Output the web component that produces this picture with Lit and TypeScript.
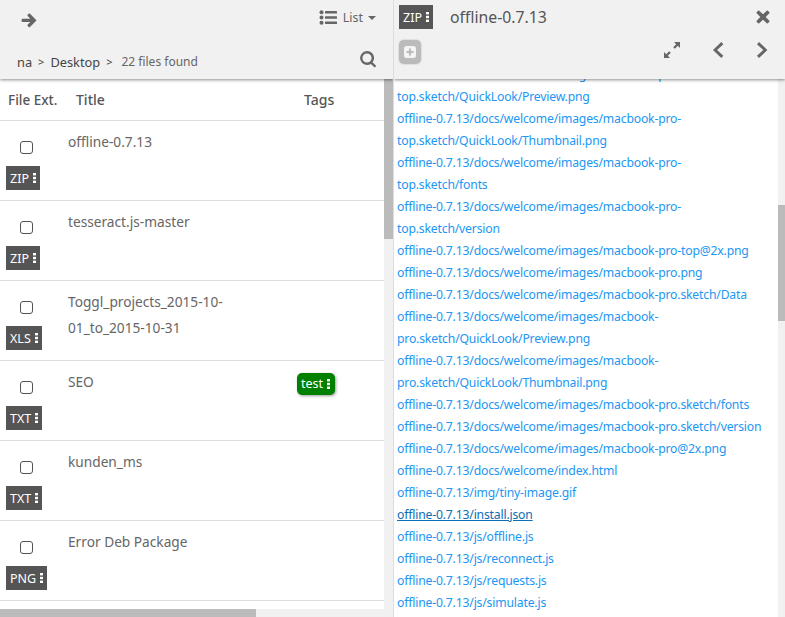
import { LitElement, html, css, svg } from "lit";
import { customElement } from "lit/decorators.js";

const dots = html`<svg class="dots" viewBox="0 0 3 10" width="3" height="10"><rect width="3" height="2.4" y="0" /><rect width="3" height="2.4" y="3.8" /><rect width="3" height="2.4" y="7.6" /></svg>`;
const chip = (t: string) => html`<span class="chip">${t}${dots}</span>`;

const rows = [
  { t: ["offline-0.7.13"], e: "ZIP" },
  { t: ["tesseract.js-master"], e: "ZIP" },
  { t: ["Toggl_projects_2015-10-", "01_to_2015-10-31"], e: "XLS" },
  { t: ["SEO"], e: "TXT", tag: "test" },
  { t: ["kunden_ms"], e: "TXT" },
  { t: ["Error Deb Package"], e: "PNG" },
];

const P = "offline-0.7.13/docs/welcome/images/";
const links = [
  P + "macbook-pro-",
  "top.sketch/QuickLook/Preview.png",
  P + "macbook-pro-",
  "top.sketch/QuickLook/Thumbnail.png",
  P + "macbook-pro-",
  "top.sketch/fonts",
  P + "macbook-pro-",
  "top.sketch/version",
  P + "macbook-pro-top@2x.png",
  P + "macbook-pro.png",
  P + "macbook-pro.sketch/Data",
  P + "macbook-",
  "pro.sketch/QuickLook/Preview.png",
  P + "macbook-",
  "pro.sketch/QuickLook/Thumbnail.png",
  P + "macbook-pro.sketch/fonts",
  P + "macbook-pro.sketch/version",
  P + "macbook-pro@2x.png",
  "offline-0.7.13/docs/welcome/index.html",
  "offline-0.7.13/img/tiny-image.gif",
  "offline-0.7.13/install.json",
  "offline-0.7.13/js/offline.js",
  "offline-0.7.13/js/reconnect.js",
  "offline-0.7.13/js/requests.js",
  "offline-0.7.13/js/simulate.js",
];

const icon = (w: number, h: number, vb: string, body: unknown, cls = "ic") =>
  html`<svg class=${cls} width=${w} height=${h} viewBox=${vb}>${body}</svg>`;

@customElement("app-root")
export class AppRoot extends LitElement {
  static styles = css`
    :host { display: block; width: 785px; height: 617px; overflow: hidden; font-family: "Noto Sans", sans-serif; color: #555; background: #fff; }
    .app { display: grid; grid-template-columns: 393px 392px; height: 617px; }
    .left, .right { display: flex; flex-direction: column; height: 617px; min-width: 0; overflow: hidden; position: relative; }
    .right { border-left: 1px solid #ddd; box-sizing: border-box; }
    .hdr { height: 79px; flex: none; background: #f1f1f1; box-shadow: 0 1px 3px rgba(0,0,0,.45); position: relative; z-index: 2; box-sizing: border-box; }
    .ic { fill: #666; display: block; flex: none; }
    .l1 { display: flex; align-items: center; justify-content: space-between; height: 40px; padding: 0 17px 0 21px; }
    .viewbtn { display: flex; align-items: center; gap: 5px; font-size: 12.5px; color: #666; margin-top: -6px; }
    .caret { width: 0; height: 0; border: 4px solid transparent; border-top-color: #666; border-bottom: 0; margin-top: 2px; }
    .l2 { display: flex; align-items: center; justify-content: space-between; height: 39px; padding: 0 16px 0 17px; }
    .crumbs { display: flex; align-items: center; font-size: 12.8px; color: #444; margin-top: 4px; }
    .sep { margin: 0 6px; font-size: 11px; }
    .found { font-size: 12px; color: #666; margin-left: 3px; }
    .lbody { flex: 1; display: grid; grid-template-columns: 384px 9px; grid-template-rows: 1fr 8px; min-height: 0; }
    .tbl { overflow: hidden; min-height: 0; }
    .thead { display: grid; grid-template-columns: 76px 228px 1fr; height: 42px; box-sizing: border-box; align-items: center; border-bottom: 1px solid #ddd; font-size: 14px; font-weight: 500; color: #555; }
    .thead span:first-child { padding-left: 8px; font-size: 13.5px; }
    .row { display: grid; grid-template-columns: 68px 229px 1fr; height: 80px; box-sizing: border-box; border-bottom: 1px solid #ddd; }
    .sel { display: flex; flex-direction: column; align-items: flex-start; padding: 20px 0 0 6px; }
    .cb { width: 11px; height: 11px; border: 1.5px solid #555; border-radius: 3px; margin: 0 0 0 14px; }
    .chip { display: inline-flex; align-items: center; gap: 4px; height: 24px; box-sizing: border-box; padding: 0 4px; background: #555; color: #fff; font-size: 12.5px; }
    .dots { fill: currentColor; flex: none; }
    .sel .chip { margin-top: 12px; }
    .title { font-size: 13.7px; line-height: 26px; padding-top: 8px; color: #666; }
    .tagcell { padding-top: 10px; }
    .tag { display: inline-flex; align-items: center; gap: 4px; height: 22px; box-sizing: border-box; padding: 0 5px 0 4px; background: #008000; color: #fff; font-size: 12.5px; border-radius: 5px; box-shadow: 1px 1px 3px rgba(0,0,0,.4); }
    .vtrack { background: #f1f1f1; grid-row: 1 / 3; grid-column: 2; }
    .vthumb { background: #bbb; height: 160px; }
    .htrack { background: #f1f1f1; }
    .hthumb { background: #bbb; width: 256px; height: 8px; }
    .r1 { display: flex; align-items: center; height: 34px; padding: 0 15px 0 5px; box-sizing: border-box; }
    .name { font-size: 15.8px; color: #555; margin-left: 17px; flex: 1; margin-top: -1px; }
    .r2 { display: flex; align-items: center; height: 36px; padding: 0 17px 0 5px; }
    .add { width: 22px; height: 24px; background: #bbb; border-radius: 5px; display: flex; align-items: center; justify-content: center; box-shadow: 0 0 2px rgba(0,0,0,.25); }
    .nav { margin-left: auto; display: flex; align-items: center; gap: 32px; margin-top: -4px; }
    .rbody { flex: 1; display: grid; grid-template-columns: 1fr 7px; min-height: 0; }
    .list { overflow: hidden; padding-left: 3px; min-height: 0; }
    .inner { margin-top: -15px; }
    .list a { display: block; font-size: 12.2px; letter-spacing: -.18px; line-height: 22px; color: #2196f3; white-space: nowrap; }
    .list a.hot { color: #0b6eb8; text-decoration: underline; }
    .rtrack { background: #f1f1f1; padding-top: 126px; }
    .rthumb { background: #bbb; height: 116px; }
  `;

  render() {
    const arrow = svg`<path d="M15.2 8.7 9 14.9c-.4.4-1 .4-1.4 0l-.9-.9c-.4-.4-.4-1 0-1.4l2.6-2.6H1.6c-.6 0-1-.4-1-1V7.7c0-.6.4-1 1-1h7.7L6.7 4.1c-.4-.4-.4-1 0-1.4l.9-.9c.4-.4 1-.4 1.4 0l6.2 6.2c.4.3.4.3 0 .7z"/>`;
    const list = svg`<circle cx="2" cy="2.2" r="2"/><circle cx="2" cy="7.5" r="2"/><circle cx="2" cy="12.8" r="2"/><rect x="5.5" y="1" width="12" height="2.4" rx=".5"/><rect x="5.5" y="6.3" width="12" height="2.4" rx=".5"/><rect x="5.5" y="11.6" width="12" height="2.4" rx=".5"/>`;
    const search = svg`<path fill-rule="evenodd" d="M7 0a7 7 0 0 1 5.6 11.2l3.7 3.7-1.7 1.7-3.7-3.7A7 7 0 1 1 7 0zm0 2.4a4.6 4.6 0 1 0 0 9.2 4.6 4.6 0 0 0 0-9.2z"/>`;
    const close = svg`<path d="M3 .6 6.5 4 10 .6c.3-.3.7-.3 1 0l1.4 1.4c.3.3.3.7 0 1L9 6.5l3.4 3.5c.3.3.3.7 0 1L11 12.4c-.3.3-.7.3-1 0L6.5 9 3 12.4c-.3.3-.7.3-1 0L.6 11c-.3-.3-.3-.7 0-1L4 6.5.6 3c-.3-.3-.3-.7 0-1L2 .6c.3-.3.7-.3 1 0z"/>`;
    const expand = svg`<path d="M10 0h6v6l-2.2-2.2-3 3-1.6-1.6 3-3zM6 16H0v-6l2.2 2.2 3-3 1.6 1.6-3 3z"/>`;
    const left = svg`<path d="M8.6 0 10.5 2 4.6 7.5l5.9 5.5-1.9 2L.8 7.5z"/>`;
    const right = svg`<path d="M2.7 0 .8 2l5.9 5.5L.8 13l1.9 2 7.8-7.5z"/>`;
    const plus = svg`<rect width="12" height="12" rx="2.5" fill="#f4f4f4"/><path d="M5 2.5h2V5h2.5v2H7v2.5H5V7H2.5V5H5z" fill="#bbb"/>`;
    return html`<div class="app">
      <section class="left">
        <header class="hdr">
          <div class="l1">
            ${icon(16, 17, "0 0 16 17", arrow)}
            <div class="viewbtn">${icon(19, 15, "0 0 18 15", list)}<span>List</span><span class="caret"></span></div>
          </div>
          <div class="l2">
            <div class="crumbs"><span>na</span><span class="sep">&gt;</span><span>Desktop</span><span class="sep">&gt;</span><span class="found">22 files found</span></div>
            ${icon(17, 17, "0 0 17 17", search)}
          </div>
        </header>
        <div class="lbody">
          <div class="tbl">
            <div class="thead"><span>File Ext.</span><span>Title</span><span>Tags</span></div>
            ${rows.map(r => html`<div class="row">
              <div class="sel"><span class="cb"></span>${chip(r.e)}</div>
              <div class="title">${r.t.map(l => html`<div>${l}</div>`)}</div>
              <div class="tagcell">${r.tag ? html`<span class="tag">${r.tag}${dots}</span>` : ""}</div>
            </div>`)}
          </div>
          <div class="vtrack"><div class="vthumb"></div></div>
          <div class="htrack"><div class="hthumb"></div></div>
        </div>
      </section>
      <section class="right">
        <header class="hdr">
          <div class="r1">${chip("ZIP")}<span class="name">offline-0.7.13</span>${icon(14, 14, "0 0 13 13", close)}</div>
          <div class="r2">
            <div class="add">${icon(12, 12, "0 0 12 12", plus)}</div>
            <div class="nav">${icon(16, 16, "0 0 16 16", expand)}${icon(12, 16, "0 0 11 15", left)}${icon(12, 16, "0 0 11 15", right)}</div>
          </div>
        </header>
        <div class="rbody">
          <div class="list"><div class="inner">
            ${links.map(l => html`<a class=${l.endsWith("install.json") ? "hot" : ""}>${l}</a>`)}
          </div></div>
          <div class="rtrack"><div class="rthumb"></div></div>
        </div>
      </section>
    </div>`;
  }
}
